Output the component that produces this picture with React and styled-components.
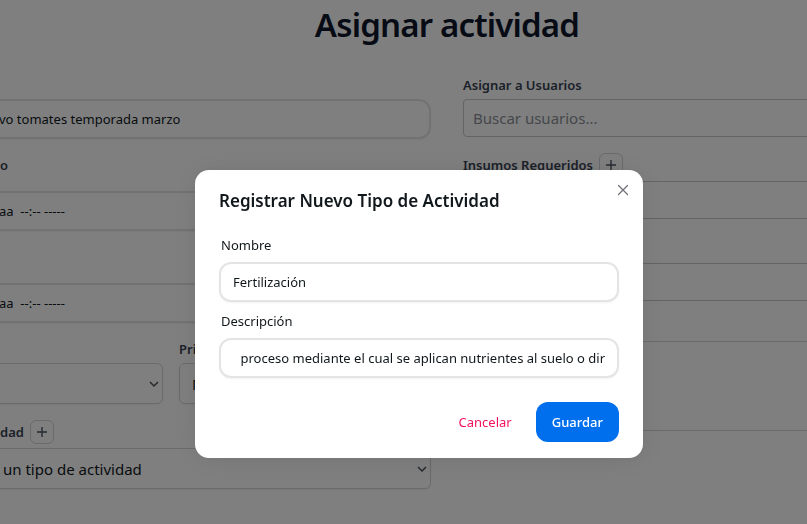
import React from "react";
import styled, { createGlobalStyle, css } from "styled-components";

const GlobalStyle = createGlobalStyle`
  *, *::before, *::after { box-sizing: border-box; }
  body {
    margin: 0;
    background: #fff;
    color: #11181c;
    font-family: "Segoe UI", "Noto Sans", "Open Sans", sans-serif;
    font-size: 13px;
    line-height: 20px;
    overflow: hidden;
  }
  button, input, select, textarea { font: inherit; color: inherit; margin: 0; }
`;

/* The form is wider than the window and bleeds past both of its sides. */
const Viewport = styled.div`
  min-height: 100vh;
  overflow: hidden;
`;

const Page = styled.main`
  margin: 0 -103px 0 -16px;
  padding: 5px 0 32px;
`;

const Title = styled.h1`
  margin: 0 0 30px;
  font-size: 33px;
  line-height: 40px;
  font-weight: 600;
  letter-spacing: -0.025em;
  text-align: center;
  color: #0f172a;
`;

const Form = styled.form`
  display: grid;
  grid-template-columns: 447px 1fr;
  gap: 32px;
`;

const Column = styled.div`
  display: flex;
  flex-direction: column;
  gap: 16px;
  min-width: 0;
`;

const Field = styled.div`
  display: flex;
  flex-direction: column;
  gap: ${(p) => p.$gap || 4}px;
`;

const FieldRow = styled.div`
  display: grid;
  grid-template-columns: 179px 1fr;
  gap: 16px;
`;

const LabelRow = styled.div`
  display: flex;
  align-items: center;
  gap: 6px;
  min-height: ${(p) => (p.$tall ? 24 : 20)}px;
  padding-left: ${(p) => (p.$bleed ? 16 : 0)}px;
`;

const FieldLabel = styled.label`
  font-weight: 600;
  color: #374151;
  white-space: nowrap;
`;

const AddButton = styled.button`
  display: flex;
  align-items: center;
  justify-content: center;
  width: 24px;
  height: 24px;
  padding: 0;
  border: 1px solid #d1d5db;
  border-radius: 6px;
  background: transparent;
  color: #4b5563;
`;

const roundedField = css`
  width: 100%;
  height: 40px;
  padding: 0 12px;
  border: 2px solid #e4e4e7;
  border-radius: 12px;
  background: #fff;
  box-shadow: 0 1px 2px rgba(0, 0, 0, 0.05);
  outline: none;
`;

const RoundedInput = styled.input`
  ${roundedField}
  text-align: ${(p) => (p.$end ? "right" : "left")};
`;

const BleedInput = styled(RoundedInput)`
  padding-left: 13px;
`;

const PlainInput = styled.input`
  width: 100%;
  height: 38px;
  padding: 0 9px;
  border: 1px solid #c6c8cc;
  border-radius: 4px;
  background: #fff;
  font-size: 15px;
  outline: none;
  &::placeholder { color: #8b8f97; opacity: 1; }
`;

const PlainTextarea = styled.textarea`
  display: block;
  width: 100%;
  height: 90px;
  border: 1px solid #d1d5db;
  border-radius: 4px;
  background: #fff;
  resize: none;
`;

const SelectBox = styled.div`
  display: grid;
  align-items: center;
  > * { grid-area: 1 / 1; }
  > svg { justify-self: end; margin-right: 3px; pointer-events: none; }
`;

const Select = styled.select`
  appearance: none;
  width: 100%;
  height: 41px;
  padding: 0 12px 0 ${(p) => (p.$bleed ? 18 : 12)}px;
  border: 1px solid #d1d5db;
  border-radius: 6px;
  background: #fff;
  font-size: 15px;
  box-shadow: 0 1px 2px rgba(0, 0, 0, 0.05);
`;

const Backdrop = styled.div`
  position: fixed;
  inset: 0;
  display: flex;
  justify-content: center;
  align-items: flex-start;
  padding: 170px 0 0 31px;
  background: rgba(0, 0, 0, 0.5);
`;

const Dialog = styled.section`
  position: relative;
  width: 100%;
  max-width: 448px;
  padding: 17px 24px 16px;
  border-radius: 14px;
  background: #fff;
  box-shadow: 0 0 15px rgba(0, 0, 0, 0.04), 0 2px 30px rgba(0, 0, 0, 0.08);
`;

const DialogTitle = styled.h2`
  margin: 0 0 19px;
  font-size: 17px;
  line-height: 28px;
  font-weight: 600;
`;

const DialogFields = styled.div`
  display: flex;
  flex-direction: column;
  gap: 8px;
`;

const DialogLabel = styled.label`
  padding: 2px 2px 7px;
  line-height: 19px;
`;

const DialogField = styled.div`
  display: flex;
  flex-direction: column;
`;

const DialogActions = styled.footer`
  display: flex;
  justify-content: flex-end;
  gap: 8px;
  padding-top: 24px;
`;

const ActionButton = styled.button`
  height: 40px;
  padding: 0 16px;
  border: 0;
  border-radius: 12px;
  background: ${(p) => (p.$primary ? "#006fee" : "transparent")};
  color: ${(p) => (p.$primary ? "#fff" : "#f31260")};
  font-weight: ${(p) => (p.$primary ? 500 : 400)};
`;

const CloseButton = styled.button`
  position: absolute;
  top: 8px;
  right: 8px;
  display: flex;
  align-items: center;
  justify-content: center;
  width: 24px;
  height: 24px;
  padding: 0;
  border: 0;
  background: transparent;
  color: #71717a;
`;

const PlusIcon = () => (
  <svg width="12" height="12" viewBox="0 0 12 12" fill="none" stroke="currentColor" strokeWidth="1.4" aria-hidden="true">
    <path d="M6 1v10M1 6h10" />
  </svg>
);

const ChevronIcon = () => (
  <svg width="12" height="12" viewBox="0 0 12 12" fill="none" stroke="#4b5058" strokeWidth="1.5" aria-hidden="true">
    <path d="M2 4l4 4 4-4" />
  </svg>
);

const CloseIcon = () => (
  <svg width="12" height="12" viewBox="0 0 12 12" fill="none" stroke="currentColor" strokeWidth="1.3" strokeLinecap="round" aria-hidden="true">
    <path d="M1.5 1.5l9 9M10.5 1.5l-9 9" />
  </svg>
);

export default function App() {
  return (
    <>
      <GlobalStyle />
      <Viewport>
        <Page>
          <Title>Asignar actividad</Title>
          <Form>
            <Column>
              <Field>
                <LabelRow />
                <BleedInput aria-label="Cultivo" defaultValue="vo tomates temporada marzo" />
              </Field>
              <Field $gap={16}>
                <LabelRow $bleed>
                  <FieldLabel htmlFor="start">o</FieldLabel>
                </LabelRow>
                <BleedInput id="start" defaultValue="aa  --:-- -----" />
              </Field>
              <Field $gap={16}>
                <LabelRow />
                <BleedInput aria-label="Fecha" defaultValue="aa  --:-- -----" />
              </Field>
              <FieldRow>
                <Field>
                  <LabelRow />
                  <SelectBox>
                    <Select aria-label="Estado" />
                    <ChevronIcon />
                  </SelectBox>
                </Field>
                <Field>
                  <LabelRow>
                    <FieldLabel htmlFor="priority">Prioridad</FieldLabel>
                  </LabelRow>
                  <SelectBox>
                    <Select id="priority">
                      <option>Media</option>
                    </Select>
                    <ChevronIcon />
                  </SelectBox>
                </Field>
              </FieldRow>
              <Field>
                <LabelRow $tall $bleed>
                  <FieldLabel htmlFor="type">dad</FieldLabel>
                  <AddButton type="button" aria-label="Agregar tipo">
                    <PlusIcon />
                  </AddButton>
                </LabelRow>
                <SelectBox>
                  <Select id="type" $bleed>
                    <option>un tipo de actividad</option>
                  </Select>
                  <ChevronIcon />
                </SelectBox>
              </Field>
            </Column>
            <Column>
              <Field>
                <LabelRow>
                  <FieldLabel htmlFor="users">Asignar a Usuarios</FieldLabel>
                </LabelRow>
                <PlainInput id="users" placeholder="Buscar usuarios..." />
              </Field>
              <Field>
                <LabelRow $tall>
                  <FieldLabel htmlFor="supplies">Insumos Requeridos</FieldLabel>
                  <AddButton type="button" aria-label="Agregar insumo">
                    <PlusIcon />
                  </AddButton>
                </LabelRow>
                <PlainInput id="supplies" />
              </Field>
              <Field>
                <LabelRow $tall />
                <PlainInput aria-label="Herramientas" />
              </Field>
              <Field>
                <LabelRow />
                <PlainTextarea aria-label="Observaciones" />
              </Field>
            </Column>
          </Form>
        </Page>
      </Viewport>
      <Backdrop>
        <Dialog role="dialog" aria-modal="true" aria-labelledby="dialog-title">
          <CloseButton type="button" aria-label="Cerrar">
            <CloseIcon />
          </CloseButton>
          <DialogTitle id="dialog-title">Registrar Nuevo Tipo de Actividad</DialogTitle>
          <DialogFields>
            <DialogField>
              <DialogLabel htmlFor="name">Nombre</DialogLabel>
              <RoundedInput id="name" defaultValue="Fertilización" />
            </DialogField>
            <DialogField>
              <DialogLabel htmlFor="description">Descripción</DialogLabel>
              <RoundedInput
                id="description"
                $end
                defaultValue="proceso mediante el cual se aplican nutrientes al suelo o dir"
              />
            </DialogField>
          </DialogFields>
          <DialogActions>
            <ActionButton type="button">Cancelar</ActionButton>
            <ActionButton type="button" $primary>Guardar</ActionButton>
          </DialogActions>
        </Dialog>
      </Backdrop>
    </>
  );
}
